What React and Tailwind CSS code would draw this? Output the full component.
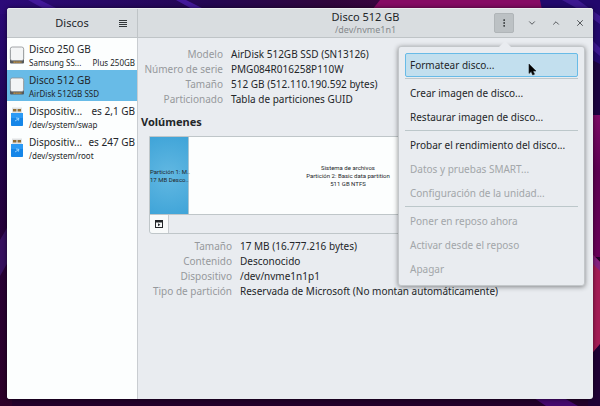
import { ChevronDown, ChevronUp, X, EllipsisVertical } from 'lucide-react';

const DRIVES = [
  { id: 'sda', kind: 'disk', name: ['Disco 250 GB'], detail: ['Samsung SS...', 'Plus 250GB'] },
  { id: 'nvme1n1', kind: 'disk', name: ['Disco 512 GB'], detail: ['AirDisk 512GB SSD'], selected: true },
  { id: 'swap', kind: 'usb', name: ['Dispositiv...', 'es 2,1 GB'], detail: ['/dev/system/swap'] },
  { id: 'root', kind: 'usb', name: ['Dispositiv...', 'es 247 GB'], detail: ['/dev/system/root'] },
];

const DRIVE_INFO = [
  ['Modelo', 'AirDisk 512GB SSD (SN13126)'],
  ['Número de serie', 'PMG084R016258P110W'],
  ['Tamaño', '512 GB (512.110.190.592 bytes)'],
  ['Particionado', 'Tabla de particiones GUID'],
];

const VOLUME_INFO = [
  ['Tamaño', '17 MB (16.777.216 bytes)'],
  ['Contenido', 'Desconocido'],
  ['Dispositivo', '/dev/nvme1n1p1'],
  ['Tipo de partición', 'Reservada de Microsoft (No montan automáticamente)'],
];

const MENU_GROUPS = [
  [{ label: 'Formatear disco...', active: true }],
  [{ label: 'Crear imagen de disco...' }, { label: 'Restaurar imagen de disco...' }],
  [
    { label: 'Probar el rendimiento del disco...' },
    { label: 'Datos y pruebas SMART...', disabled: true },
    { label: 'Configuración de la unidad...', disabled: true },
  ],
  [
    { label: 'Poner en reposo ahora', disabled: true },
    { label: 'Activar desde el reposo', disabled: true },
    { label: 'Apagar', disabled: true },
  ],
];

function Wallpaper() {
  return (
    <svg className="absolute inset-0 w-full h-full" viewBox="0 0 600 406" preserveAspectRatio="none" aria-hidden="true">
      <defs>
        <linearGradient id="left" x1="0" y1="0" x2="0" y2="1">
          <stop offset="0" stopColor="#2b0878" />
          <stop offset="0.3" stopColor="#1d0552" />
          <stop offset="0.6" stopColor="#260036" />
          <stop offset="1" stopColor="#2c0028" />
        </linearGradient>
        <linearGradient id="top" x1="0" y1="0" x2="1" y2="0">
          <stop offset="0" stopColor="#2c0a78" />
          <stop offset="0.35" stopColor="#240652" />
          <stop offset="0.55" stopColor="#30063c" />
          <stop offset="0.65" stopColor="#3a0440" />
        </linearGradient>
        <linearGradient id="right" x1="0" y1="0" x2="0" y2="1">
          <stop offset="0" stopColor="#7c0a66" />
          <stop offset="0.4" stopColor="#5c0052" />
          <stop offset="1" stopColor="#680058" />
        </linearGradient>
      </defs>
      <rect width="600" height="406" fill="#22002a" />
      <rect width="12" height="406" fill="url(#left)" />
      <rect width="600" height="14" fill="url(#top)" />
      <path d="M28 0h12l20 10H46zM176 0h10l20 10h-12z" fill="#43189a" />
      <path d="M380 0h170l-4 10H372z" fill="#860a64" />
      <path d="M540 0h60v116h-12V10h-46z" fill="#22086c" />
      <path d="M562 0h16l22 16v8l-20-14z" fill="#3c1890" />
      <path d="M588 36l12 12v8l-12-10z" fill="#3c1890" />
      <path d="M588 58l12 6v52h-12z" fill="#1b0340" />
      <rect x="588" y="115" width="12" height="142" fill="url(#right)" />
      <path d="M588 250l12 12v84l-12 14z" fill="#a31c55" />
      <path d="M588 250l12 12v9l-12-12z" fill="#842080" />
      <path d="M588 358l12-14v62h-12z" fill="#1e0034" />
      <path d="M534 398h30l14 8h-32z" fill="#44086c" />
      <path d="M0 240l8-14v36l-8 14z" fill="#36105e" />
    </svg>
  );
}

function DiskIcon() {
  return (
    <svg viewBox="0 0 16 20" className="w-4 h-5 shrink-0" aria-hidden="true">
      <path d="M1 5v12.5a1 1 0 0 0 1 1h12a1 1 0 0 0 1-1V5z" fill="#55595c" />
      <rect x="1.3" y="2" width="13.4" height="13.6" rx="2" fill="#f3f5f6" stroke="#8d9194" strokeWidth="0.8" />
      <path d="M4.5 17.2h8" stroke="#e0a03a" strokeWidth="1.2" strokeDasharray="1.4 0.5" />
    </svg>
  );
}

function UsbIcon() {
  return (
    <svg viewBox="0 0 16 20" className="w-4 h-5 shrink-0" aria-hidden="true">
      <rect x="3" y="0.5" width="10" height="6" fill="#e0e2e3" />
      <path d="M4 2h3.4v2.4H4zM8.6 2H12v2.4H8.6z" fill="#8f6d35" />
      <rect x="2" y="6" width="12" height="13" rx="0.8" fill="#1586e8" />
      <rect x="2" y="6" width="12" height="5" rx="0.8" fill="#2b9af5" />
      <path d="M6 14l4-2.5M7 11l3 .4-.8 2.4" fill="none" stroke="#a8dcff" strokeWidth="0.8" />
    </svg>
  );
}

function DriveRow({ drive }) {
  return (
    <li>
      <button
        className={`w-full h-[31px] flex items-center gap-1 px-[2px] text-left text-[#232629] ${
          drive.selected ? 'bg-[#68bbe7]' : ''
        }`}
      >
        {drive.kind === 'disk' ? <DiskIcon /> : <UsbIcon />}
        <span className="flex-1 min-w-0 flex flex-col">
          <span className="flex justify-between text-[10px] leading-4 whitespace-nowrap">
            {drive.name.map(part => <span key={part}>{part}</span>)}
          </span>
          <span className="flex justify-between text-[8px] leading-3 whitespace-nowrap">
            {drive.detail.map(part => <span key={part}>{part}</span>)}
          </span>
        </span>
      </button>
    </li>
  );
}

function InfoList({ rows, labelClass }) {
  return (
    <dl className="text-[10px] leading-[15px] whitespace-nowrap">
      {rows.map(([label, value]) => (
        <div key={label} className="flex gap-2">
          <dt className={`${labelClass} shrink-0 text-right text-[#96999c]`}>{label}</dt>
          <dd className="text-[#232629]">{value}</dd>
        </div>
      ))}
    </dl>
  );
}

function DriveMenu() {
  return (
    <div className="absolute z-10 top-[38px] right-[8px] w-[187px] rounded-[3px] border border-[#c3c7ca] bg-[#e9ecf0] px-[6px] pt-[6px] pb-1 shadow-[0_1px_5px_rgba(0,0,0,0.45)]">
      <svg viewBox="0 0 14 8" className="absolute -top-[7px] left-[99px] w-[14px] h-2" aria-hidden="true">
        <path d="M0 8l7-7 7 7z" fill="#e9ecf0" />
      </svg>
      {MENU_GROUPS.map((group, i) => (
        <div key={group[0].label} className={i > 0 ? 'border-t border-[#bcc7ca] mt-px pt-[2px]' : ''}>
          {group.map(item => (
            <button
              key={item.label}
              disabled={item.disabled}
              className={`block w-full h-6 px-1 rounded-[2px] border text-left text-[10px] whitespace-nowrap ${
                item.active ? 'border-[#68bbe7] bg-[#c2dfee]' : 'border-transparent'
              } ${item.disabled ? 'text-[#a2a6a9]' : 'text-[#232629]'}`}
            >
              {item.label}
            </button>
          ))}
        </div>
      ))}
    </div>
  );
}

function Cursor() {
  return (
    <svg viewBox="0 0 9 13" className="absolute z-20 top-[55px] right-[56px] w-[9px] h-[13px]" aria-hidden="true">
      <path d="M1 1v9.4l2.2-1.8 1.5 3.4 1.8-.8L5 8h3z" fill="#000" stroke="#222" strokeWidth="0.6" />
    </svg>
  );
}

export default function App() {
  return (
    <div className="relative h-screen pt-2 pb-[7px] px-[7px] overflow-hidden font-['Noto_Sans',sans-serif] text-[#232629]">
      <Wallpaper />
      <div className="relative h-full flex flex-col rounded-[3px] bg-[#e9ecf0] shadow-[0_0_4px_rgba(0,0,0,0.6)]">
        <header className="flex h-[30px] shrink-0 rounded-t-[3px] border-b border-[#bfc4c7] border-t border-t-[#eceeef] bg-[#d9dde0]">
          <div className="w-[131px] shrink-0 flex items-center border-r border-[#bfc4c7] pr-[10px]">
            <h1 className="flex-1 pl-[18px] text-[11px] text-center">Discos</h1>
            <button aria-label="Menú" className="w-2 flex flex-col gap-px">
              <span className="h-px bg-[#33373a]" />
              <span className="h-px bg-[#33373a]" />
              <span className="h-px bg-[#33373a]" />
              <span className="h-px bg-[#33373a]" />
            </button>
          </div>
          <div className="flex-1 flex items-center">
            <div className="flex-1 pl-[99px] text-center whitespace-nowrap">
              <h2 className="text-[11px] leading-[14px]">Disco 512 GB</h2>
              <p className="text-[9px] leading-3 text-[#85898c]">/dev/nvme1n1</p>
            </div>
            <button aria-label="Opciones de la unidad" className="size-5 grid place-items-center rounded-[2px] border border-[#b0b5b8] bg-[#bcc1c4]">
              <EllipsisVertical size={10} strokeWidth={2} />
            </button>
            <div className="flex items-center gap-[14px] pl-[13px] pr-2 text-[#3c4043]">
              <button aria-label="Minimizar"><ChevronDown size={10} strokeWidth={2} /></button>
              <button aria-label="Maximizar"><ChevronUp size={10} strokeWidth={2} /></button>
              <button aria-label="Cerrar"><X size={10} strokeWidth={2} /></button>
            </div>
          </div>
        </header>

        <div className="flex-1 min-h-0 flex">
          <nav aria-label="Unidades" className="w-[131px] shrink-0 rounded-bl-[3px] border-r border-[#c9cdd1] bg-[#fcfefe] pt-px">
            <ul>
              {DRIVES.map(drive => <DriveRow key={drive.id} drive={drive} />)}
            </ul>
          </nav>

          <main className="flex-1 min-w-0 px-[3px] pt-[9px]">
            <InfoList rows={DRIVE_INFO} labelClass="w-[82px]" />
            <h3 className="mt-[7px] text-[11px] leading-[15px] font-bold">Volúmenes</h3>

            <div className="mt-[7px] mx-2 rounded-b-[3px] border border-[#bfc6c9]">
              <div className="flex h-[78px] font-['Roboto',sans-serif] text-[6px] leading-2 text-center border-b border-[#bfc6c9] bg-[#fcfefe]">
                <button className="w-[39px] shrink-0 bg-[radial-gradient(circle,#62b8e2,#3fa4d8)] border-r border-[#a9c5d2] whitespace-nowrap">
                  Partición 1: M..<br />17 MB Desco..
                </button>
                <button className="flex-1">
                  Sistema de archivos<br />Partición 2: Basic data partition<br />511 GB NTFS
                </button>
                <button aria-label="Espacio libre" className="w-[74px] border-l border-[#bfc6c9]" />
              </div>
              <div className="flex h-[18px]">
                <button aria-label="Montar partición" className="w-[19px] grid place-items-center rounded-bl-[3px] border-r border-[#c9cdd1] bg-[#f8fafa]">
                  <svg viewBox="0 0 8 8" className="size-2" aria-hidden="true">
                    <path d="M0 0h8v8H0zM1 2.4V7h6V2.4z" fill="#232629" fillRule="evenodd" />
                    <path d="M3 3.2l2.4 1.5L3 6.2z" fill="#232629" />
                  </svg>
                </button>
              </div>
            </div>

            <div className="mt-[5px]">
              <InfoList rows={VOLUME_INFO} labelClass="w-[91px]" />
            </div>
          </main>
        </div>

        <DriveMenu />
        <Cursor />
      </div>
    </div>
  );
}
